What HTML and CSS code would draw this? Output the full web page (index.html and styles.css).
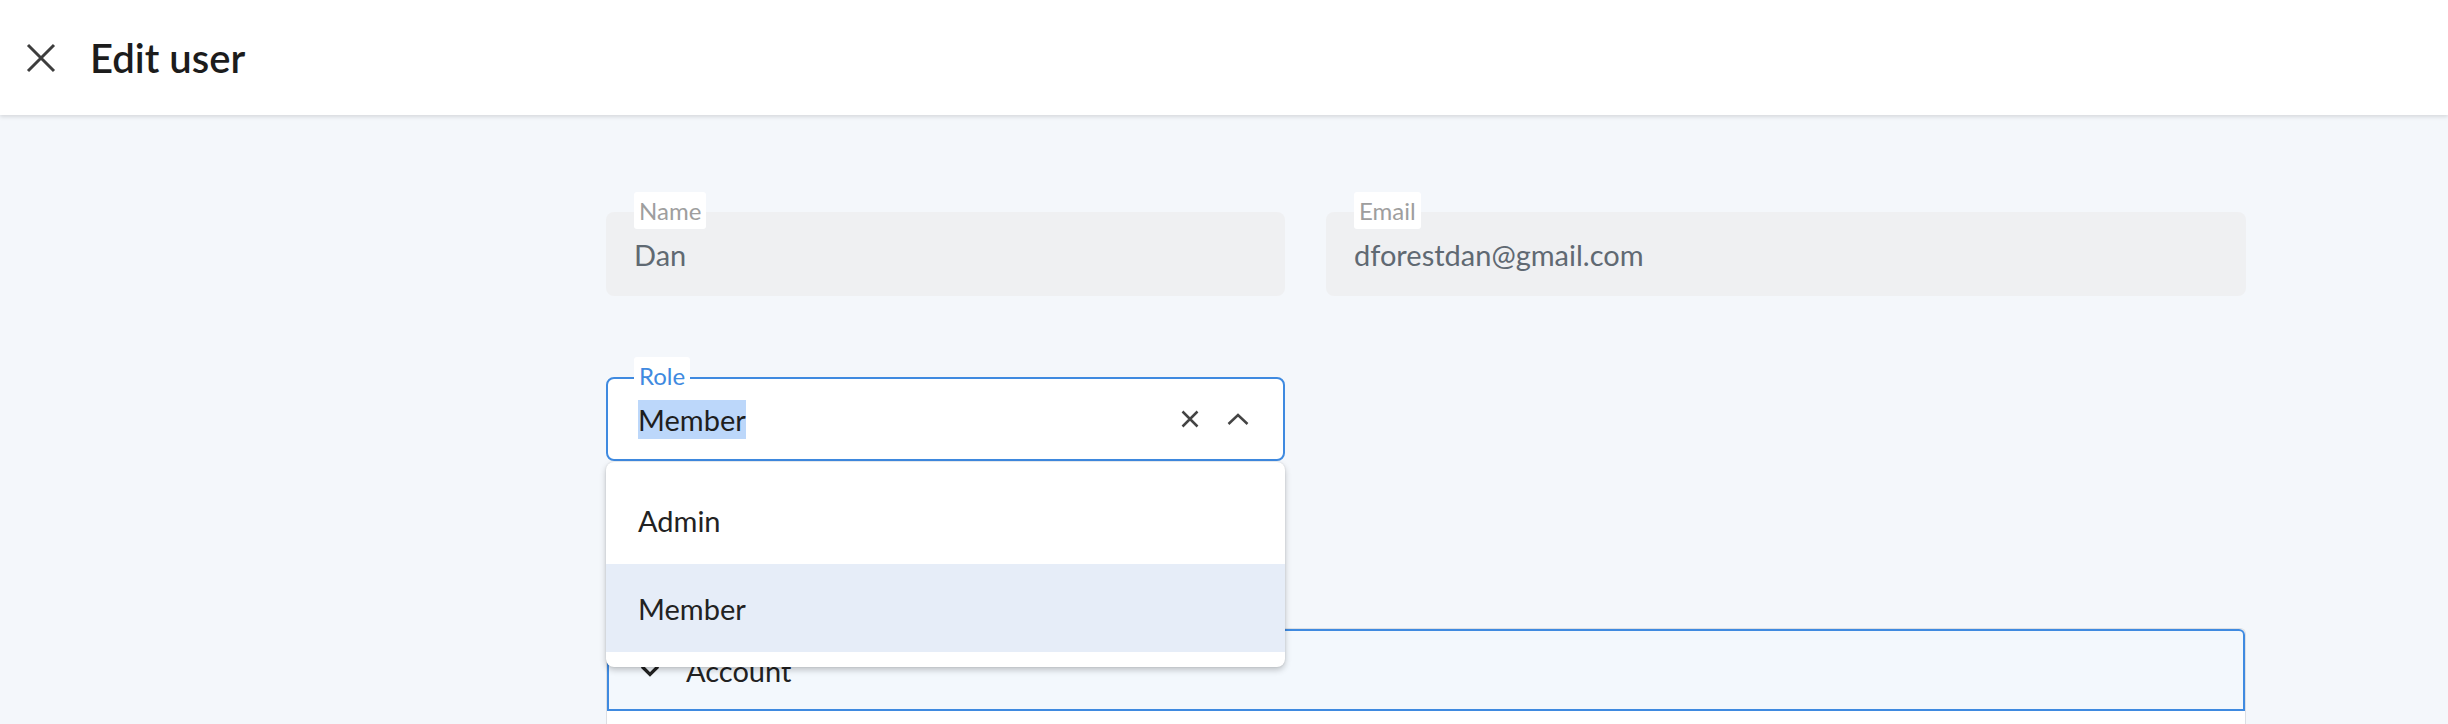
FILE: index.html
```html
<!DOCTYPE html>
<html>
<head>
    <title>Edit user</title>
    <link rel="stylesheet" href="styles.css">
</head>
<body>
    <header class="topbar">
        <button class="close-btn" type="button" aria-label="Close">
            <svg width="30" height="30" viewBox="0 0 30 30">
                <path d="M2 2L28 28M28 2L2 28" stroke="#3d3d3d" stroke-width="3" fill="none"/>
            </svg>
        </button>
        <h1>Edit user</h1>
    </header>

    <main class="form">
        <div class="row">
            <div class="field readonly">
                <span class="field-label">Name</span>
                <span class="field-value">Dan</span>
            </div>
            <div class="field readonly">
                <span class="field-label">Email</span>
                <span class="field-value">dforestdan@gmail.com</span>
            </div>
        </div>

        <div class="row">
            <div class="field select open">
                <span class="field-label">Role</span>
                <span class="field-value"><span class="selected-text">Member</span></span>
                <div class="select-icons">
                    <svg width="18" height="18" viewBox="0 0 18 18">
                        <path d="M1.5 1.5L16.5 16.5M16.5 1.5L1.5 16.5" stroke="#444" stroke-width="2.5" fill="none"/>
                    </svg>
                    <svg width="22" height="12" viewBox="0 0 22 12">
                        <path d="M1.5 11L11 2L20.5 11" stroke="#444" stroke-width="2.5" fill="none"/>
                    </svg>
                </div>
                <ul class="dropdown">
                    <li class="option">Admin</li>
                    <li class="option active">Member</li>
                </ul>
            </div>
        </div>

        <section class="accordion">
            <div class="accordion-head">
                <svg width="20" height="13" viewBox="0 0 20 13">
                    <path d="M2 2.5L10 10.5L18 2.5" stroke="#222" stroke-width="3.2" fill="none"/>
                </svg>
                <span>Account</span>
            </div>
            <div class="accordion-body"></div>
        </section>
    </main>
</body>
</html>
```
FILE: styles.css
```css
* {
	box-sizing: border-box;
}

body {
	margin: 0;
	background-color: #f4f7fb;
	font-family: Lato, "Noto Sans", sans-serif;
	color: #222;
}

/* top bar */
.topbar {
	position: relative;
	z-index: 2;
	height: 115px;
	display: flex;
	align-items: center;
	padding-left: 26px;
	background-color: #fff;
	box-shadow: 0 2px 4px rgba(0, 0, 0, 0.12);
}

.close-btn {
	display: flex;
	width: 30px;
	height: 30px;
	padding: 0;
	margin-right: 34px;
	border: none;
	background: none;
	cursor: pointer;
}

.topbar h1 {
	margin: 0;
	font-size: 40px;
	font-weight: 600;
	color: #1c1c1c;
}

/* form */
.form {
	width: 1640px;
	margin-left: 606px;
	padding-top: 97px;
}

.row {
	display: grid;
	grid-template-columns: 679px 920px;
	column-gap: 41px;
	margin-bottom: 81px;
}

.field {
	position: relative;
	height: 84px;
	display: flex;
	align-items: center;
	padding: 0 28px;
	border-radius: 8px;
}

.field-label {
	position: absolute;
	left: 28px;
	top: -20px;
	padding: 0 5px;
	line-height: 37px;
	font-size: 24px;
	color: #9e9e9e;
	background-color: #fff;
	border-radius: 3px;
}

.field-value {
	flex: 1;
	font-size: 29px;
}

.field.readonly {
	background-color: #eff0f2;
	color: #606972;
}

/* role select */
.field.select {
	background-color: #fff;
	border: 2px solid #3f8ae0;
	padding: 0 34px 0 30px;
}

.field.select .field-label {
	left: 26px;
	top: -22px;
	color: #3f8ae0;
}

.selected-text {
	display: inline-block;
	line-height: 39px;
	background-color: #bcd7fa;
	color: #1e1e1e;
}

.select-icons {
	display: flex;
	align-items: center;
	gap: 28px;
}

.select-icons svg {
	display: block;
}

.dropdown {
	position: absolute;
	z-index: 5;
	top: calc(100% + 3px);
	left: -2px;
	right: -2px;
	margin: 0;
	padding: 14px 0 15px;
	list-style: none;
	background-color: #fff;
	border-radius: 8px;
	box-shadow: 0 3px 6px rgba(0, 0, 0, 0.22), 0 0 2px rgba(0, 0, 0, 0.12);
}

.option {
	height: 88px;
	display: flex;
	align-items: center;
	padding-left: 32px;
	font-size: 29px;
	color: #222;
}

.option.active {
	background-color: #e6edf8;
}

/* account section */
.accordion {
	margin-top: 167px;
	border: 1px solid #dcdfe4;
	border-bottom: none;
	border-radius: 6px 6px 0 0;
	background-color: #fff;
}

.accordion-head {
	height: 82px;
	display: flex;
	align-items: center;
	gap: 26px;
	padding-left: 31px;
	border: 2px solid #3f8ae0;
	border-radius: 6px 6px 0 0;
	background-color: #f3f8fd;
	font-size: 29px;
}

.accordion-head svg {
	display: block;
}

.accordion-body {
	height: 200px;
}
```
